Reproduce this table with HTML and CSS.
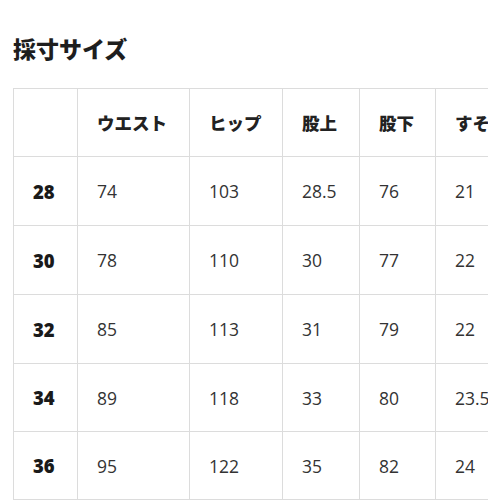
FILE: index.html
```html
<!DOCTYPE html>
<html lang="ja">
<head>
<meta charset="utf-8">
<link rel="stylesheet" href="styles.css">
</head>
<body>
<div class="page">
  <h1 class="title">採寸サイズ</h1>
  <div class="table-wrap">
    <table class="size-table">
      <colgroup>
        <col class="c0"><col class="c1"><col class="c2"><col class="c3"><col class="c4"><col class="c5">
      </colgroup>
      <thead>
        <tr class="head-row">
          <th></th><th>ウエスト</th><th>ヒップ</th><th>股上</th><th>股下</th><th>すそ幅</th>
        </tr>
      </thead>
      <tbody>
        <tr class="r69"><th>28</th><td>74</td><td>103</td><td>28.5</td><td>76</td><td>21</td></tr>
        <tr class="r69"><th>30</th><td>78</td><td>110</td><td>30</td><td>77</td><td>22</td></tr>
        <tr class="r69"><th>32</th><td>85</td><td>113</td><td>31</td><td>79</td><td>22</td></tr>
        <tr class="r68"><th>34</th><td>89</td><td>118</td><td>33</td><td>80</td><td>23.5</td></tr>
        <tr class="r68"><th>36</th><td>95</td><td>122</td><td>35</td><td>82</td><td>24</td></tr>
      </tbody>
    </table>
  </div>
</div>
</body>
</html>
```

FILE: styles.css
```css
html, body {
  margin: 0;
  padding: 0;
  background: #fff;
}
.page {
  padding: 34px 0 0 13px;
}
.title {
  margin: 0 0 26px 0;
  height: 28px;
  font-family: "Noto Sans CJK JP", sans-serif;
  font-weight: 900;
  font-size: 23px;
  line-height: 28px;
  color: #1e1e1e;
}
.table-wrap {
  width: 475px;
  overflow: hidden;
}
.size-table {
  border-collapse: collapse;
  table-layout: fixed;
  width: 560px;
  font-family: "Open Sans", "Noto Sans CJK JP", sans-serif;
}
.c0 { width: 64px; }
.c1 { width: 112px; }
.c2 { width: 93px; }
.c3 { width: 77px; }
.c4 { width: 76px; }
.c5 { width: 138px; }
.size-table th,
.size-table td {
  border: 1px solid #dcdcdc;
  padding: 0 0 0 19px;
  text-align: left;
  vertical-align: middle;
  white-space: nowrap;
  overflow: hidden;
}
.head-row { height: 68px; }
.head-row th {
  font-family: "Noto Sans CJK JP", sans-serif;
  font-weight: 900;
  font-size: 17.5px;
  color: #222;
}
.r69 { height: 69px; }
.r68 { height: 68px; }
tbody th {
  font-weight: 800;
  font-size: 18.5px;
  color: #1a1a1a;
}
tbody td {
  font-weight: 400;
  font-size: 17.5px;
  color: #333;
}
```
